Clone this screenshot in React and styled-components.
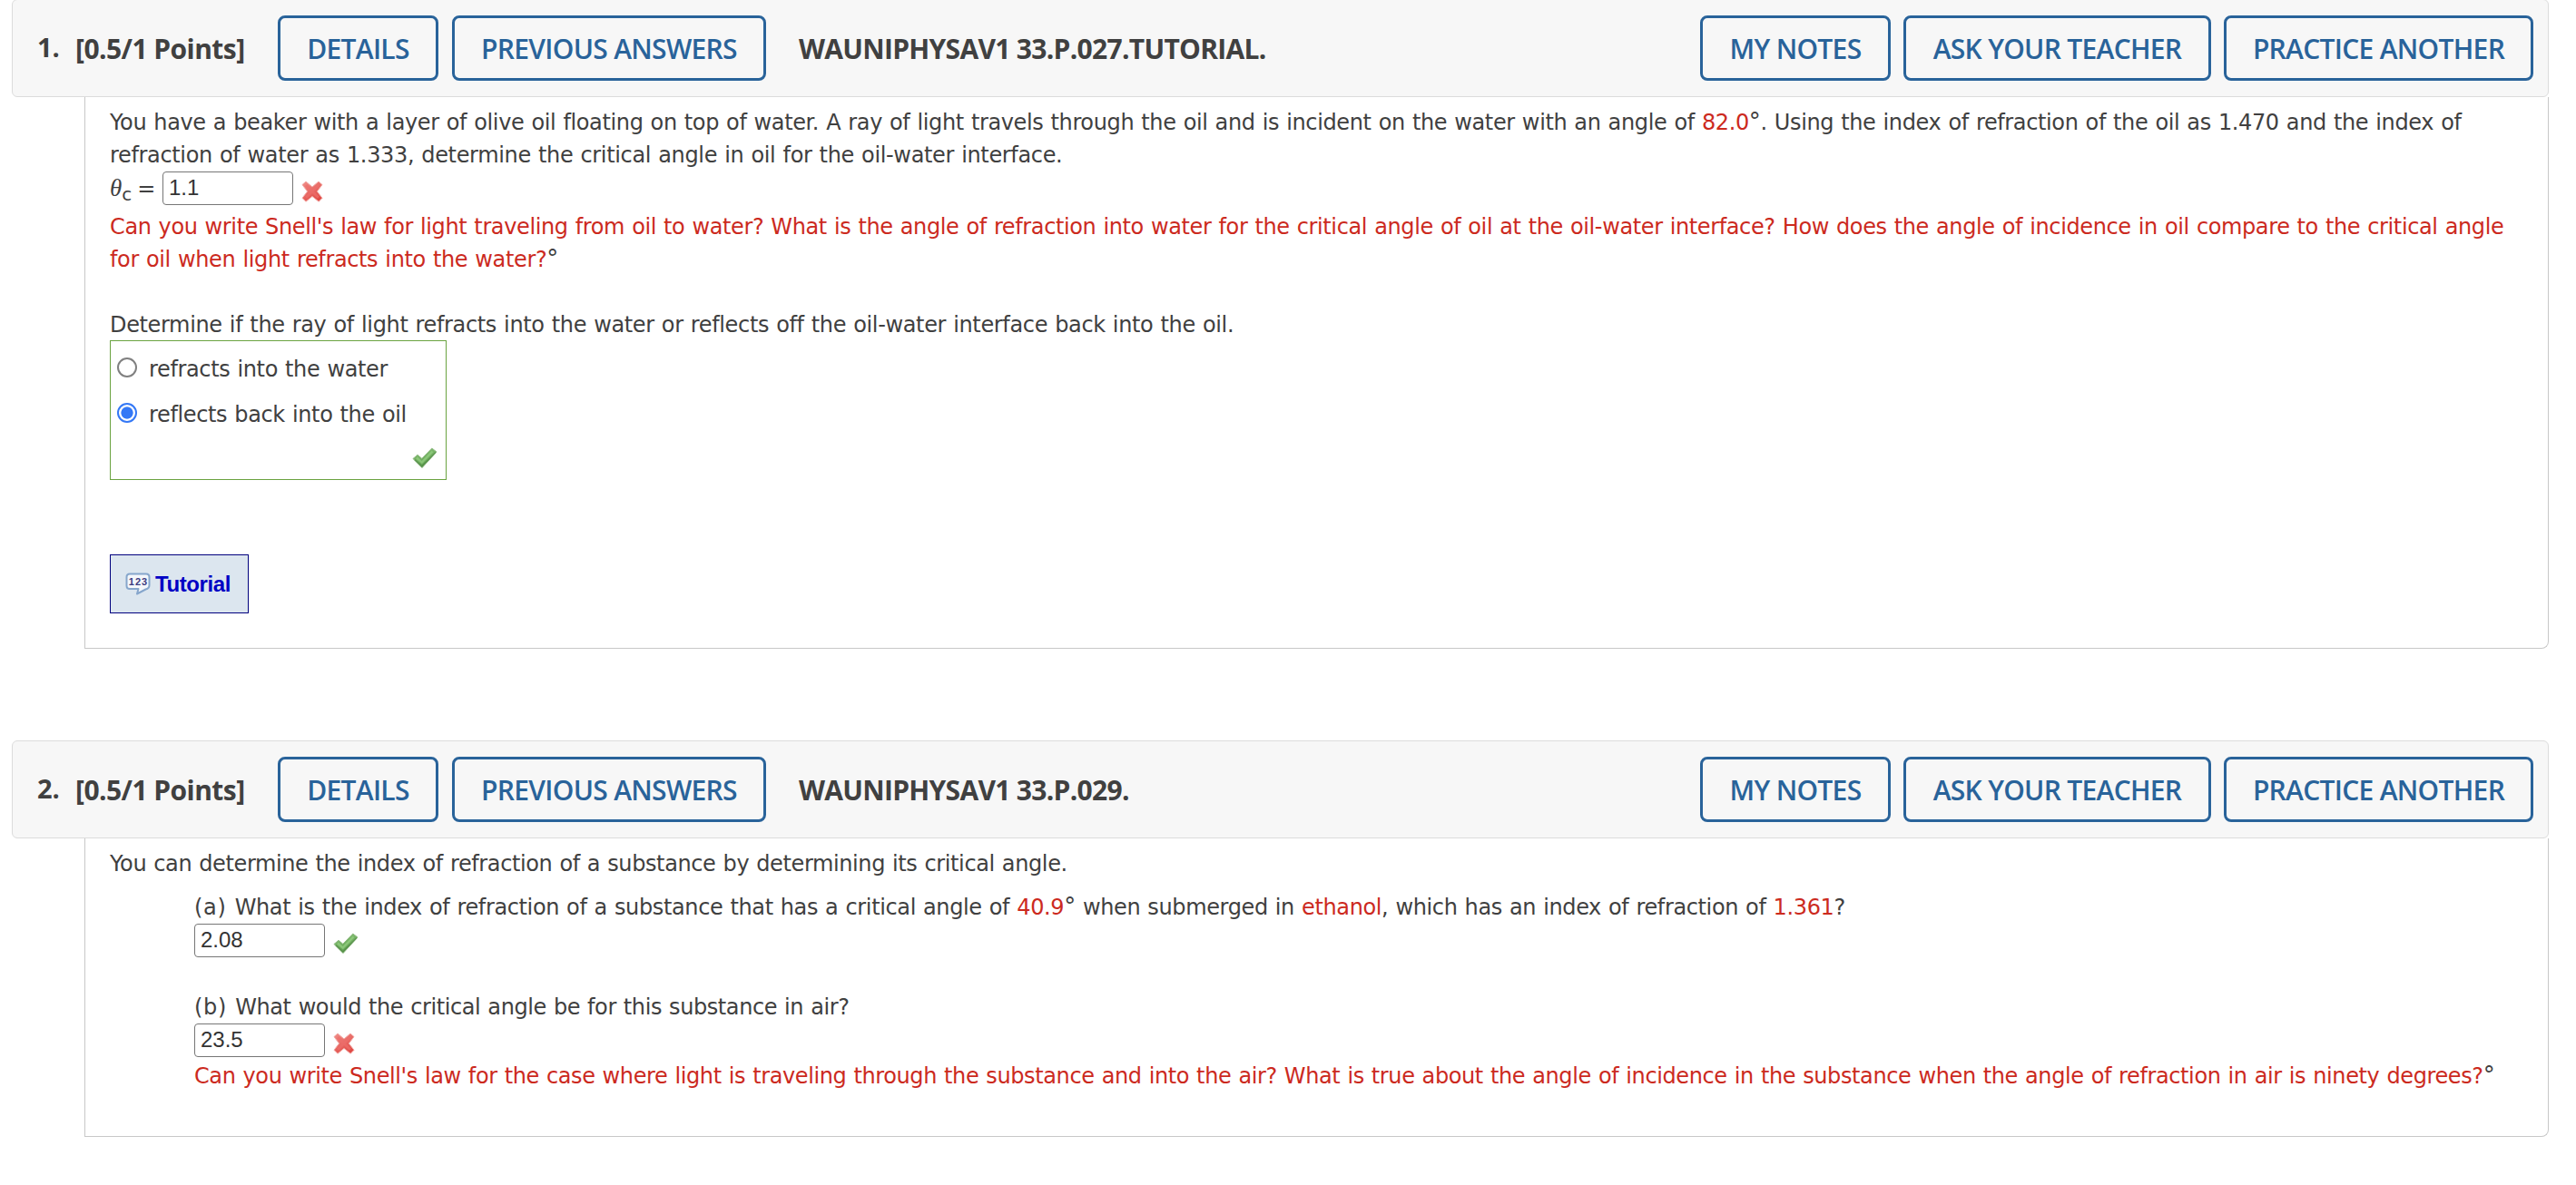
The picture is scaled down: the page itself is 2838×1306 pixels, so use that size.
import React, { useState } from "react";
import styled, { createGlobalStyle } from "styled-components";

const GlobalStyle = createGlobalStyle`
  * {
    box-sizing: border-box;
  }
  body {
    margin: 0;
    background: #fff;
    color: #404040;
    overflow: hidden;
  }
`;

const Page = styled.main`
  display: flex;
  flex-direction: column;
  gap: 101px;
  width: 2795px;
  margin: -1px 0 0 13px;
`;

const QuestionHeader = styled.header`
  display: flex;
  align-items: center;
  height: 108px;
  padding: 0 16px 0 27px;
  border: 1px solid #dcdcdc;
  border-radius: 6px;
  background: #f7f7f7;
  font-family: "Open Sans", sans-serif;
  font-size: 30px;
  font-weight: 700;
`;

const Num = styled.span`
  width: 42px;
  font-size: 29px;
  padding-bottom: 3px;
`;

const Points = styled.span`
  width: 223px;
  letter-spacing: -0.55px;
  white-space: nowrap;
`;

const Title = styled.span`
  margin-left: 36px;
  letter-spacing: -0.7px;
  white-space: nowrap;
`;

const ButtonGroup = styled.div`
  display: flex;
  gap: ${(p) => p.$gap || "14px"};
  margin-left: ${(p) => (p.$right ? "auto" : "0")};
`;

const HeaderButton = styled.button`
  width: ${(p) => p.$width}px;
  height: 72px;
  padding: 0;
  border: 3px solid #29639a;
  border-radius: 8px;
  background: transparent;
  color: #29639a;
  font: 600 30px "Open Sans", sans-serif;
  letter-spacing: -0.7px;
  white-space: nowrap;
`;

const QuestionBody = styled.div`
  display: flex;
  flex-direction: column;
  align-items: flex-start;
  height: ${(p) => p.$height}px;
  margin-left: 80px;
  padding: 10px 0 0 27px;
  border: 1px solid #c8c8c8;
  border-top: 0;
  border-radius: 0 0 8px 0;
  font-family: "DejaVu Sans", Verdana, sans-serif;
  font-size: 24px;
`;

const Line = styled.div`
  height: 36px;
  line-height: 36px;
  margin-top: ${(p) => p.$top || 0}px;
  letter-spacing: ${(p) => p.$spacing || -0.36}px;
  word-spacing: 0.8px;
  white-space: pre;
`;

const Red = styled.span`
  color: #cc2a1e;
`;

const Degree = styled.span`
  font-size: 26px;
  line-height: 0;
`;

const PartLabel = styled.span`
  letter-spacing: 0.7px;
`;

const AnswerRow = styled.div`
  display: flex;
  align-items: center;
  height: 37px;
`;

const Theta = styled.span`
  width: 58px;
  line-height: 36px;
  white-space: nowrap;

  i {
    font-family: "Liberation Serif", serif;
    font-size: 27px;
  }
  sub {
    font-size: 20px;
    line-height: 0;
    vertical-align: -5px;
    margin-right: 6px;
  }
`;

const AnswerInput = styled.input`
  width: 144px;
  height: 37px;
  padding: 0 0 2px 6px;
  border: 1px solid #767676;
  border-radius: 4px;
  background: #fff;
  color: #333;
  font: 24px "Liberation Sans", Arial, sans-serif;
  outline: none;
`;

const MarkSlot = styled.span`
  display: flex;
  margin: 6px 0 0 9px;
`;

const Choices = styled.div`
  display: flex;
  flex-direction: column;
  width: 371px;
  height: 154px;
  margin-top: -1px;
  padding: 6px 9px 0 7px;
  border: 1px solid #6aa340;

  svg {
    align-self: flex-end;
    margin-top: 11px;
  }
`;

const Choice = styled.label`
  display: flex;
  align-items: center;
  height: 50px;
  line-height: 50px;
  letter-spacing: -0.36px;
  word-spacing: 0.8px;
  white-space: nowrap;
`;

const Radio = styled.input`
  appearance: none;
  flex: none;
  width: 22px;
  height: 22px;
  margin: 0 13px 5px 0;
  border: 2px solid #808080;
  border-radius: 50%;
  background: #fff;

  &:checked {
    border-color: #3478f6;
    background: radial-gradient(circle, #3478f6 6.2px, #fff 7px);
  }
`;

const TutorialLink = styled.button`
  display: flex;
  align-items: center;
  width: 153px;
  height: 65px;
  margin-top: 82px;
  padding: 0 0 0 16px;
  border: 1px solid #00007e;
  background: #dce6ef;
  color: #0000c4;
  font: bold 24px "Liberation Sans", Arial, sans-serif;
  letter-spacing: -0.4px;

  svg {
    margin-right: 5px;
  }
`;

const Parts = styled.div`
  display: flex;
  flex-direction: column;
  padding: 12px 0 0 93px;
`;

const Part = styled.div`
  display: flex;
  flex-direction: column;
  margin-bottom: ${(p) => p.$bottom || 0}px;
`;

function CheckMark() {
  return (
    <svg width="28" height="24" viewBox="0 0 28 24">
      <defs>
        <linearGradient id="check" x1="0" y1="0" x2="0.4" y2="1">
          <stop offset="0" stopColor="#8cc47a" />
          <stop offset="1" stopColor="#5f9f50" />
        </linearGradient>
      </defs>
      <path
        d="M1 12.5 6 8.3 10.8 12.3 21.8 1 27 5 11 22.6Z"
        fill="url(#check)"
        stroke="#93bd86"
        strokeWidth="1"
        strokeLinejoin="round"
      />
      <path d="M3 13.8 10.8 21 26 5.6" fill="none" stroke="#4f8843" strokeWidth="1.3" opacity="0.7" />
      <path d="M5 11.5 10.8 16.6 22.5 4.5" fill="none" stroke="#93cf80" strokeWidth="2.4" opacity="0.75" />
    </svg>
  );
}

function CrossMark() {
  return (
    <svg width="24" height="24" viewBox="0 0 24 24">
      <defs>
        <linearGradient id="cross" x1="0" y1="0" x2="0.6" y2="1">
          <stop offset="0" stopColor="#f0908b" />
          <stop offset="1" stopColor="#e04a45" />
        </linearGradient>
      </defs>
      <path
        d="M5 1 12 7 19 1 23 4.6 17.4 12 23 19.3 19.2 23.2 12 17.4 5 23.2 1 19.3 6.6 12 1 4.6Z"
        fill="url(#cross)"
        stroke="#f3aaa6"
        strokeWidth="1"
        strokeLinejoin="round"
      />
      <path d="M5.2 5.2 18.8 18.8M18.8 5.2 5.2 18.8" stroke="#ee6e6b" strokeWidth="3" opacity="0.7" />
    </svg>
  );
}

function TutorialIcon() {
  return (
    <svg width="28" height="25" viewBox="0 0 28 25">
      <path
        d="M5 1.5H23Q26.5 1.5 26.5 5V14Q26.5 17.5 22.5 18.5L13 23.5 14.5 18H5Q1.5 18 1.5 14.5V5Q1.5 1.5 5 1.5Z"
        fill="#f4f7fb"
        stroke="#86a6cc"
        strokeWidth="2"
        strokeLinejoin="round"
      />
      <text
        x="14.5"
        y="13.5"
        textAnchor="middle"
        fontFamily="Liberation Sans, sans-serif"
        fontSize="11"
        fontWeight="700"
        letterSpacing="1"
        fill="#3c3c80"
      >
        123
      </text>
    </svg>
  );
}

function Header({ num, title }) {
  return (
    <QuestionHeader>
      <Num>{num}.</Num>
      <Points>[0.5/1 Points]</Points>
      <ButtonGroup $gap="15px">
        <HeaderButton $width={177}>DETAILS</HeaderButton>
        <HeaderButton $width={346}>PREVIOUS ANSWERS</HeaderButton>
      </ButtonGroup>
      <Title>{title}</Title>
      <ButtonGroup $right>
        <HeaderButton $width={210}>MY NOTES</HeaderButton>
        <HeaderButton $width={339}>ASK YOUR TEACHER</HeaderButton>
        <HeaderButton $width={341}>PRACTICE ANOTHER</HeaderButton>
      </ButtonGroup>
    </QuestionHeader>
  );
}

function Answer({ label, value, correct }) {
  return (
    <AnswerRow>
      {label}
      <AnswerInput defaultValue={value} />
      <MarkSlot>{correct ? <CheckMark /> : <CrossMark />}</MarkSlot>
    </AnswerRow>
  );
}

const options = ["refracts into the water", "reflects back into the oil"];

function App() {
  const [selected, setSelected] = useState(1);

  return (
    <>
      <GlobalStyle />
      <Page>
        <section>
          <Header num={1} title="WAUNIPHYSAV1 33.P.027.TUTORIAL." />
          <QuestionBody $height={608}>
            <Line $spacing={-0.368}>
              You have a beaker with a layer of olive oil floating on top of water. A ray of light travels through
              the oil and is incident on the water with an angle of <Red>82.0</Red>
              <Degree>°</Degree>. Using the index of refraction of the oil as 1.470 and the index of
            </Line>
            <Line $spacing={-0.34}>
              refraction of water as 1.333, determine the critical angle in oil for the oil-water interface.
            </Line>
            <Answer
              label={
                <Theta>
                  <i>θ</i>
                  <sub>c</sub>=
                </Theta>
              }
              value="1.1"
            />
            <Line $top={6} $spacing={-0.378}>
              <Red>
                Can you write Snell's law for light traveling from oil to water? What is the angle of refraction into
                water for the critical angle of oil at the oil-water interface? How does the angle of incidence in oil
                compare to the critical angle
              </Red>
            </Line>
            <Line>
              <Red>for oil when light refracts into the water?</Red>
              <Degree>°</Degree>
            </Line>
            <Line $top={36} $spacing={-0.35}>
              Determine if the ray of light refracts into the water or reflects off the oil-water interface back into
              the oil.
            </Line>
            <Choices>
              {options.map((option, i) => (
                <Choice key={option}>
                  <Radio type="radio" name="ray" checked={selected === i} onChange={() => setSelected(i)} />
                  {option}
                </Choice>
              ))}
              <CheckMark />
            </Choices>
            <TutorialLink>
              <TutorialIcon />
              Tutorial
            </TutorialLink>
          </QuestionBody>
        </section>

        <section>
          <Header num={2} title="WAUNIPHYSAV1 33.P.029." />
          <QuestionBody $height={329}>
            <Line $spacing={-0.385}>
              You can determine the index of refraction of a substance by determining its critical angle.
            </Line>
            <Parts>
              <Part $bottom={37}>
                <Line $spacing={-0.37}>
                  <PartLabel>(a) </PartLabel>What is the index of refraction of a substance that has a critical angle
                  of <Red>40.9</Red>
                  <Degree>°</Degree> when submerged in <Red>ethanol</Red>, which has an index of refraction of{" "}
                  <Red>1.361</Red>?
                </Line>
                <Answer value="2.08" correct />
              </Part>
              <Part>
                <Line $spacing={-0.41}>
                  <PartLabel>(b) </PartLabel>What would the critical angle be for this substance in air?
                </Line>
                <Answer value="23.5" />
                <Line $top={3} $spacing={-0.388}>
                  <Red>
                    Can you write Snell's law for the case where light is traveling through the substance and into the
                    air? What is true about the angle of incidence in the substance when the angle of refraction in air
                    is ninety degrees?
                  </Red>
                  <Degree>°</Degree>
                </Line>
              </Part>
            </Parts>
          </QuestionBody>
        </section>
      </Page>
    </>
  );
}

export default App;
